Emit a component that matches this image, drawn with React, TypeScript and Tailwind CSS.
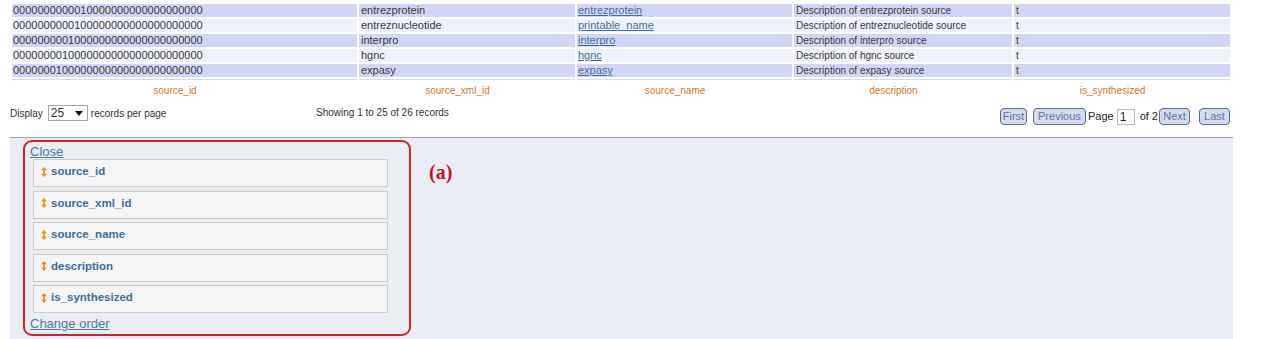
import React from "react";

const rows = [
  { id: "0000000000010000000000000000000", xml: "entrezprotein", name: "entrezprotein", desc: "Description of entrezprotein source" },
  { id: "0000000000100000000000000000000", xml: "entreznucleotide", name: "printable_name", desc: "Description of entreznucleotide source" },
  { id: "0000000001000000000000000000000", xml: "interpro", name: "interpro", desc: "Description of interpro source" },
  { id: "0000000010000000000000000000000", xml: "hgnc", name: "hgnc", desc: "Description of hgnc source" },
  { id: "0000000100000000000000000000000", xml: "expasy", name: "expasy", desc: "Description of expasy source" },
];

const columns = ["source_id", "source_xml_id", "source_name", "description", "is_synthesized"];

const SortIcon = () => (
  <svg width="6" height="10" viewBox="0 0 6 10" className="shrink-0">
    <path d="M3 0 L6 3.2 L3.9 3.2 L3.9 6.8 L6 6.8 L3 10 L0 6.8 L2.1 6.8 L2.1 3.2 L0 3.2 Z" fill="#e8911c" />
  </svg>
);

const PageButton = ({ label, w }: { label: string; w: string }) => (
  <div
    className={`${w} h-[17px] rounded-[4px] border border-[#5d6c8c] bg-[#d3dbef] text-[11px] leading-[15px] text-[#62759f] text-center`}
  >
    {label}
  </div>
);

const App = () => {
  return (
    <div className="w-[1279px] h-[339px] overflow-hidden bg-white font-['Liberation_Sans',Arial,sans-serif] text-[#333]">
      <table className="ml-[10px] mt-[2px] w-[1222px] table-fixed border-separate border-spacing-[2px]">
        <colgroup>
          <col className="w-[345px]" />
          <col className="w-[216px]" />
          <col className="w-[215px]" />
          <col className="w-[218px]" />
          <col className="w-[216px]" />
        </colgroup>
        <tbody>
          {rows.map((r, i) => {
            const bg = i % 2 === 0 ? "bg-[#d2d6f6]" : "bg-[#eef0fb]";
            return (
              <tr key={r.id}>
                <td className={`${bg} h-[13px] p-0 pl-[1px] text-[11px] leading-[13px] text-[#3a3a3a]`}>{r.id}</td>
                <td className={`${bg} h-[13px] p-0 pl-[2px] text-[11px] leading-[13px] text-[#3a3a3a]`}>{r.xml}</td>
                <td className={`${bg} h-[13px] p-0 pl-[1px] text-[11px] leading-[13px]`}>
                  <a className="text-[#3f6f9f] underline">{r.name}</a>
                </td>
                <td className={`${bg} h-[13px] p-0 pl-[2px] text-[10px] leading-[13px] text-[#3a3a3a]`}>{r.desc}</td>
                <td className={`${bg} h-[13px] p-0 pl-[2px] text-[10px] leading-[13px] text-[#3a3a3a]`}>t</td>
              </tr>
            );
          })}
        </tbody>
        <tfoot>
          <tr>
            {columns.map((c) => (
              <td
                key={c}
                className="h-[22px] p-0 pr-[19px] border-t border-[#dadada] text-center text-[10px] leading-[20px] text-[#d07a2a]"
              >
                {c}
              </td>
            ))}
          </tr>
        </tfoot>
      </table>

      <div className="ml-[10px] w-[1223px] h-[34px] flex text-[10px] text-[#333]">
        <div className="w-[306px] mt-[2px] flex items-center h-[16px]">
          <span>Display</span>
          <div className="ml-[5px] w-[40px] h-[16px] border border-[#9ea5ae] bg-white flex items-center pl-[2px] text-[12px]">
            <span className="flex-1">25</span>
            <svg width="8" height="5" viewBox="0 0 8 5" className="mr-[4px]">
              <path d="M0 0 L8 0 L4 5 Z" fill="#111" />
            </svg>
          </div>
          <span className="ml-[3px]">records per page</span>
        </div>
        <div className="mt-[3px] leading-[14px]">Showing 1 to 25 of 26 records</div>
        <div className="ml-auto mr-[3px] mt-[5px] flex items-center h-[17px] text-[11px] text-[#222]">
          <PageButton label="First" w="w-[27px]" />
          <div className="w-[6px]" />
          <PageButton label="Previous" w="w-[53px]" />
          <span className="ml-[2px]">Page</span>
          <div className="ml-[3px] w-[18px] h-[16px] border border-[#b8bcc4] bg-white text-[12px] leading-[14px] pl-[2px]">1</div>
          <span className="ml-[5px] mr-[1px]">of 2</span>
          <PageButton label="Next" w="w-[31px]" />
          <div className="w-[9px]" />
          <PageButton label="Last" w="w-[31px]" />
        </div>
      </div>

      <div className="ml-[10px] w-[1223px] h-[202px] border-t border-[#9aa3b6] bg-[#eaedf4] pt-[2px] pl-[13px] flex items-start">
        <div className="w-[388px] h-[196px] rounded-[9px] border-2 border-[#d61f2c] pl-[5px] pr-[21px] pt-[2px]">
          <a className="block text-[13px] leading-[15px] text-[#4a7aa6] underline">Close</a>
          <div className="ml-[3px] flex flex-col gap-[3.5px]">
            {columns.map((c) => (
              <div
                key={c}
                className="h-[28px] border border-[#cdcdcd] bg-[#f5f5f5] pl-[7px] pt-[4px] flex items-start gap-[4px]"
              >
                <div className="h-[15px] flex items-center">
                  <SortIcon />
                </div>
                <span className="text-[11.5px] leading-[14px] font-bold text-[#3d6f98]">{c}</span>
              </div>
            ))}
          </div>
          <a className="block mt-[3px] text-[13px] leading-[15px] text-[#4a7aa6] underline">Change order</a>
        </div>
        <div className="ml-[18px] mt-[21px] font-['Liberation_Serif','Times_New_Roman',serif] font-bold text-[20px] leading-[22px] text-[#c8102e]">
          (a)
        </div>
      </div>
    </div>
  );
};

export default App;
